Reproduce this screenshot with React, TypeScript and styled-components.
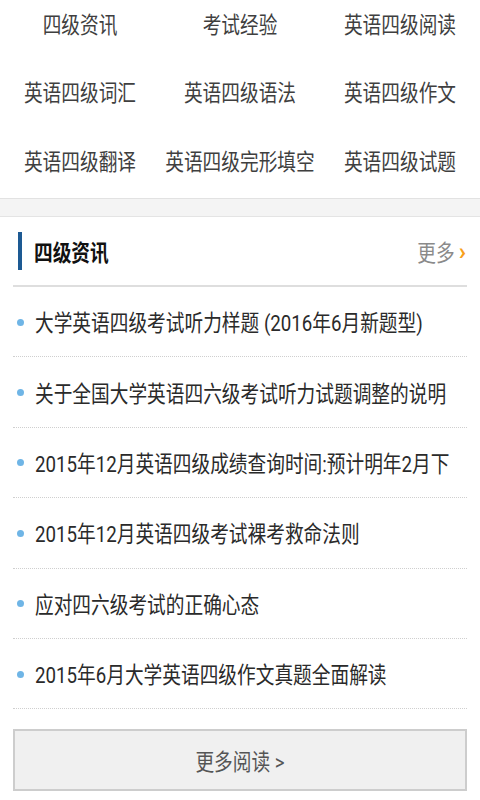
import styled, { createGlobalStyle } from "styled-components";

const CATEGORIES = [
  "四级资讯",
  "考试经验",
  "英语四级阅读",
  "英语四级词汇",
  "英语四级语法",
  "英语四级作文",
  "英语四级翻译",
  "英语四级完形填空",
  "英语四级试题",
];

const NEWS = [
  "大学英语四级考试听力样题 (2016年6月新题型)",
  "关于全国大学英语四六级考试听力试题调整的说明",
  "2015年12月英语四级成绩查询时间:预计明年2月下",
  "2015年12月英语四级考试裸考救命法则",
  "应对四六级考试的正确心态",
  "2015年6月大学英语四级作文真题全面解读",
];

const GlobalStyle = createGlobalStyle`
  html, body {
    margin: 0;
    padding: 0;
    background: #ffffff;
  }
  body {
    font-family: Roboto, "Noto Sans CJK SC", sans-serif;
    overflow: hidden;
  }
`;

const Page = styled.div`
  width: 480px;
  height: 800px;
  overflow: hidden;
  background: #ffffff;
`;

const CategoryGrid = styled.nav`
  display: grid;
  grid-template-columns: repeat(3, 1fr);
  grid-auto-rows: 68.5px;
  margin-top: -11px;
  padding-bottom: 3.5px;
`;

const CategoryItem = styled.a`
  display: flex;
  align-items: center;
  justify-content: center;
  color: #3f3f3f;
  font-size: 18.7px;
  text-decoration: none;
  white-space: nowrap;
`;

// the source screenshot has its glyphs stretched vertically
const Tall = styled.span`
  display: inline-block;
  transform: translateY(-1px) scaleY(1.2);
`;

const Divider = styled.div`
  height: 17px;
  background: #f4f4f4;
  border-top: 1px solid #e2e2e2;
  border-bottom: 1px solid #e4e4e4;
`;

const Section = styled.section`
  padding: 0 13px;
`;

const SectionHeader = styled.header`
  height: 68px;
  display: flex;
  align-items: center;
  padding-left: 5px;
  border-bottom: 2px solid #dedede;
`;

const TitleBar = styled.span`
  width: 4px;
  height: 38px;
  background: #1d5a93;
  margin-right: 12px;
`;

const Title = styled.h2`
  margin: 0;
  flex: 1;
  font-size: 18.7px;
  font-weight: 700;
  color: #111111;
`;

const MoreLink = styled.a`
  display: flex;
  align-items: center;
  gap: 4px;
  margin-right: 1px;
  color: #8a8a8a;
  font-size: 18.7px;
  text-decoration: none;

  b {
    color: #f7a01a;
    font-size: 24px;
    font-weight: 700;
    line-height: 1;
    transform: translateY(1px);
  }
`;

const NewsList = styled.ul`
  list-style: none;
  margin: 0;
  padding: 0;
`;

const NewsItem = styled.li`
  height: 69.4px;
  display: flex;
  align-items: center;
  border-bottom: 1px dotted #cfcfcf;
  color: #2a2a2a;
  font-size: 18.7px;
  white-space: nowrap;
  overflow: hidden;

  &::before {
    content: "";
    width: 7px;
    height: 7px;
    border-radius: 50%;
    background: #6fb5e6;
    margin: 1px 11px 0 4px;
    flex-shrink: 0;
  }
`;

const MoreButton = styled.button`
  display: flex;
  align-items: center;
  justify-content: center;
  width: 100%;
  height: 62px;
  margin-top: 20px;
  background: #f0f0f0;
  border: 2px solid #cdcdcd;
  color: #555555;
  font-family: inherit;
  font-size: 18.7px;
  cursor: pointer;
`;

export default function App() {
  return (
    <Page>
      <GlobalStyle />
      <CategoryGrid>
        {CATEGORIES.map((c) => (
          <CategoryItem key={c} href="#">
            <Tall>{c}</Tall>
          </CategoryItem>
        ))}
      </CategoryGrid>
      <Divider />
      <Section>
        <SectionHeader>
          <TitleBar />
          <Title>
            <Tall>四级资讯</Tall>
          </Title>
          <MoreLink href="#">
            <Tall>更多</Tall>
            <b>›</b>
          </MoreLink>
        </SectionHeader>
        <NewsList>
          {NEWS.map((n) => (
            <NewsItem key={n}>
              <Tall>{n}</Tall>
            </NewsItem>
          ))}
        </NewsList>
        <MoreButton type="button">
          <Tall>更多阅读 &gt;</Tall>
        </MoreButton>
      </Section>
    </Page>
  );
}
